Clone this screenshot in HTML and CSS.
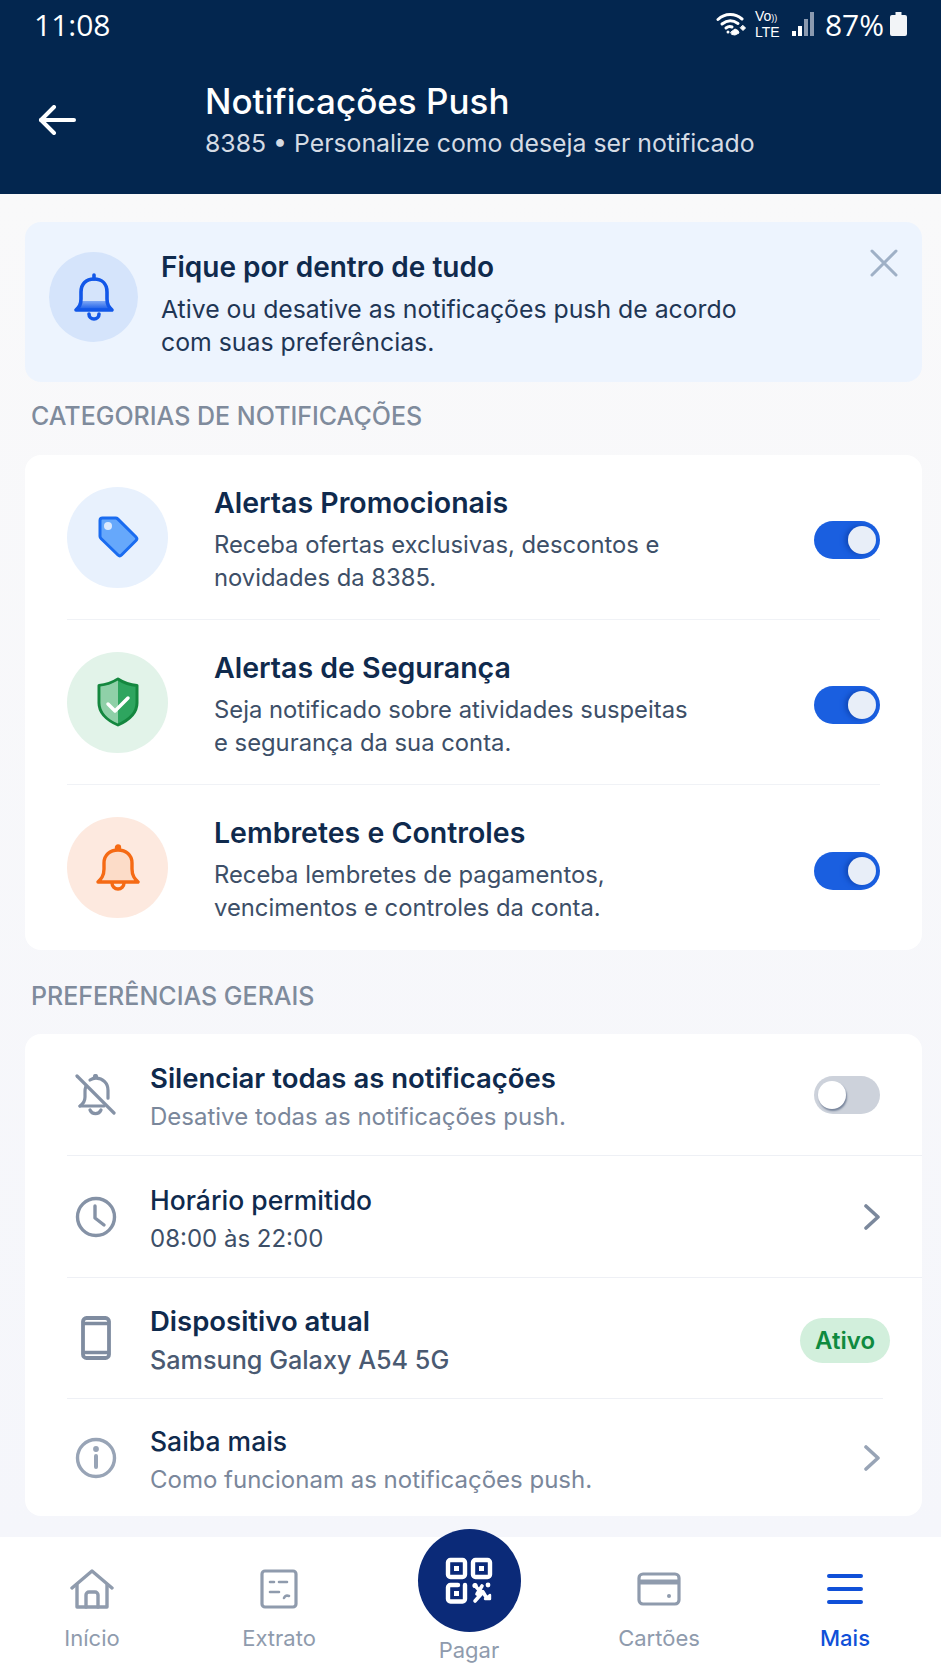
FILE: index.html
```html
<!DOCTYPE html>
<html lang="pt-br">
<head>
    <meta charset="UTF-8" />
    <title>Notificações Push</title>
    <link rel="stylesheet" href="styles.css">
</head>
<body>
    <div class="app">
        <header class="topo">
            <div class="status">
                <span class="hora">11:08</span>
                <div class="status-dir">
                    <svg class="wifi" width="31" height="24" viewBox="0 0 31 24" fill="none" stroke="#fff" stroke-width="3" stroke-linecap="round">
                        <path d="M2 7.500c7-6.500 17-6.500 24-.500"/>
                        <path d="M6 12c5-4 11-4 16-.500"/>
                        <path d="M10 16c2-1.500 4-1.800 6-1"/>
                        <path d="M15 20l4-3 3 1.500 1 2.500-4 2-3-.500z" fill="#fff" stroke-width="1"/>
                        <path d="M27 13.500l2.500 2.500-2.500 2.500-2.500-2.500z" fill="#fff" stroke-width="1"/>
                        <circle cx="12" cy="20" r="1.500" fill="#fff" stroke="none"/>
                    </svg>
                    <span class="volte">Vo<small>))</small><br>LTE</span>
                    <svg class="sinal" width="24" height="26" viewBox="0 0 24 26">
                        <rect x="1" y="20" width="4" height="5" fill="#fff"/>
                        <rect x="7" y="15" width="4" height="10" fill="#fff"/>
                        <rect x="13" y="8" width="4" height="17" fill="#8b9ab0"/>
                        <rect x="19" y="1" width="4" height="24" fill="#8b9ab0"/>
                    </svg>
                    <span class="bateria-txt">87%</span>
                    <svg class="bateria" width="17" height="24" viewBox="0 0 17 24">
                        <path d="M5.500 0h6v3h3.500a2 2 0 0 1 2 2v17a2 2 0 0 1-2 2H2a2 2 0 0 1-2-2V5a2 2 0 0 1 2-2h3.500z" fill="#f2f4f7"/>
                    </svg>
                </div>
            </div>
            <div class="barra">
                <svg class="voltar" width="38" height="30" viewBox="0 0 38 30" fill="none" stroke="#fff" stroke-width="4" stroke-linecap="round" stroke-linejoin="round">
                    <path d="M3 15h33"/>
                    <path d="M16 2 3 15l13 13"/>
                </svg>
                <div>
                    <h1>Notificações Push</h1>
                    <p>8385 • Personalize como deseja ser notificado</p>
                </div>
            </div>
        </header>

        <main class="conteudo">
            <section class="aviso">
                <div class="aviso-icone">
                    <svg width="42" height="48" viewBox="0 0 42 48" fill="none" stroke="#1257e8" stroke-width="3.600" stroke-linecap="round" stroke-linejoin="round">
                        <path d="M3 37c3-3 5-5 5-11v-7c0-8 5-13 13-13s13 5 13 13v7c0 6 2 8 5 11z" fill="url(#sino)"/>
                        <path d="M21 2v4"/>
                        <path d="M16 41a5 5 0 0 0 10 0"/>
                        <defs>
                            <linearGradient id="sino" x1="0" y1="0" x2="0" y2="1">
                                <stop offset="0.700" stop-color="#1257e8" stop-opacity="0"/>
                                <stop offset="0.710" stop-color="#7fa8f5"/>
                                <stop offset="1" stop-color="#1257e8"/>
                            </linearGradient>
                        </defs>
                    </svg>
                </div>
                <div class="aviso-texto">
                    <h2>Fique por dentro de tudo</h2>
                    <p>Ative ou desative as notificações push de acordo<br>com suas preferências.</p>
                </div>
                <svg class="fechar" width="28" height="28" viewBox="0 0 28 28" stroke="#9fb0c6" stroke-width="3" stroke-linecap="round">
                    <path d="M2 2l24 24M26 2 2 26"/>
                </svg>
            </section>

            <h3 class="secao secao-1">CATEGORIAS DE NOTIFICAÇÕES</h3>
            <section class="card">
                <div class="categoria">
                    <div class="circulo azul">
                        <svg width="44" height="44" viewBox="0 0 44 44">
                            <path d="M4 5.500a2.500 2.500 0 0 1 2.500-2.500h13a3 3 0 0 1 2.200.900l18.300 18.100a2.500 2.500 0 0 1 0 3.500L25.500 40a2.500 2.500 0 0 1-3.500 0L5 23.500a3 3 0 0 1-1-2.200z" fill="#66a8fb" stroke="#1a6cf0" stroke-width="3" stroke-linejoin="round"/>
                            <circle cx="12" cy="11" r="4" fill="#dbe9fd"/>
                        </svg>
                    </div>
                    <div class="categoria-texto">
                        <h4>Alertas Promocionais</h4>
                        <p>Receba ofertas exclusivas, descontos e<br>novidades da 8385.</p>
                    </div>
                    <span class="chave ligada"><i></i></span>
                </div>
                <div class="categoria">
                    <div class="circulo verde">
                        <svg width="44" height="50" viewBox="0 0 44 50">
                            <path d="M22 2c6 4 12 6 19 6.500V26c0 10-8 17-19 22C11 43 3 36 3 26V8.500C10 8 16 6 22 2z" fill="#2ea55f" stroke="#14873f" stroke-width="3" stroke-linejoin="round"/>
                            <path d="M22 3.500C16 7 10 9 4.500 9.500V26c0 9 7 16 17.500 20.500z" fill="#8fd0a8"/>
                            <path d="M12 27l7 7 13-13" fill="none" stroke="#fff" stroke-width="3.500" stroke-linecap="round" stroke-linejoin="round"/>
                        </svg>
                    </div>
                    <div class="categoria-texto">
                        <h4>Alertas de Segurança</h4>
                        <p>Seja notificado sobre atividades suspeitas<br>e segurança da sua conta.</p>
                    </div>
                    <span class="chave ligada"><i></i></span>
                </div>
                <div class="categoria">
                    <div class="circulo laranja">
                        <svg width="44" height="48" viewBox="0 0 44 48" fill="none" stroke="#f56a14" stroke-width="3.400" stroke-linecap="round" stroke-linejoin="round">
                            <path d="M2 38c3-3 6-6 6-13v-6c0-8 6-13 14-13s14 5 14 13v6c0 7 3 10 6 13z" fill="#fcdcc8"/>
                            <circle cx="22" cy="3.500" r="1.500" fill="#f56a14"/>
                            <path d="M16 39a6 6 0 0 0 12 0"/>
                        </svg>
                    </div>
                    <div class="categoria-texto">
                        <h4>Lembretes e Controles</h4>
                        <p>Receba lembretes de pagamentos,<br>vencimentos e controles da conta.</p>
                    </div>
                    <span class="chave ligada"><i></i></span>
                </div>
            </section>

            <h3 class="secao secao-2">PREFERÊNCIAS GERAIS</h3>
            <section class="card">
                <div class="pref">
                    <svg class="pref-icone" width="42" height="42" viewBox="0 0 42 42" fill="none" stroke="#8592a6" stroke-width="3.200" stroke-linecap="round" stroke-linejoin="round">
                        <path d="M5 32c3-2 5-4 5-9v-6c0-2 .5-3.500 1-5"/>
                        <path d="M15 6c1.800-1.200 3.800-1.800 6-1.800 7 0 12 5 12 12v8"/>
                        <path d="M5 32h24"/>
                        <circle cx="20.500" cy="2.500" r="1" fill="#8592a6"/>
                        <path d="M15 36a6 6 0 0 0 11 0"/>
                        <path d="M2 2l37 37"/>
                    </svg>
                    <div class="pref-texto">
                        <h4>Silenciar todas as notificações</h4>
                        <p class="fraco">Desative todas as notificações push.</p>
                    </div>
                    <span class="chave desligada"><i></i></span>
                </div>
                <div class="pref">
                    <svg class="pref-icone" width="42" height="42" viewBox="0 0 42 42" fill="none" stroke="#8592a6" stroke-width="3.400" stroke-linecap="round" stroke-linejoin="round">
                        <circle cx="21" cy="21" r="18.500"/>
                        <path d="M20 10v12l9 7"/>
                    </svg>
                    <div class="pref-texto">
                        <h4 class="normal">Horário permitido</h4>
                        <p>08:00 às 22:00</p>
                    </div>
                    <svg class="seta" width="16" height="26" viewBox="0 0 16 26" fill="none" stroke="#7b889c" stroke-width="3.600" stroke-linecap="round" stroke-linejoin="round">
                        <path d="M2 2l12 11L2 24"/>
                    </svg>
                </div>
                <div class="pref">
                    <svg class="pref-icone" width="42" height="44" viewBox="0 0 42 44" fill="none" stroke="#7f8ca0" stroke-width="3.800" stroke-linejoin="round">
                        <rect x="8" y="2" width="26" height="40" rx="3.500"/>
                        <path d="M8 7.500h26M8 36.500h26" stroke-width="3.400"/>
                    </svg>
                    <div class="pref-texto">
                        <h4>Dispositivo atual</h4>
                        <p class="medio">Samsung Galaxy A54 5G</p>
                    </div>
                    <span class="selo">Ativo</span>
                </div>
                <div class="pref">
                    <svg class="pref-icone" width="42" height="42" viewBox="0 0 42 42" fill="none" stroke="#98a4b6" stroke-width="3.400" stroke-linecap="round">
                        <circle cx="21" cy="21" r="18.500"/>
                        <path d="M21 19v11" stroke-width="4"/>
                        <circle cx="21" cy="12" r="1.200" fill="#98a4b6"/>
                    </svg>
                    <div class="pref-texto">
                        <h4 class="normal">Saiba mais</h4>
                        <p class="fraco">Como funcionam as notificações push.</p>
                    </div>
                    <svg class="seta" width="16" height="26" viewBox="0 0 16 26" fill="none" stroke="#98a4b6" stroke-width="3.600" stroke-linecap="round" stroke-linejoin="round">
                        <path d="M2 2l12 11L2 24"/>
                    </svg>
                </div>
            </section>
        </main>

        <nav class="menu">
            <div class="item">
                <svg width="44" height="40" viewBox="0 0 44 40" fill="none" stroke="#8f9bad" stroke-width="3.400" stroke-linecap="round" stroke-linejoin="round">
                    <path d="M2 19 22 2l20 17"/>
                    <path d="M7 16v22h30V16"/>
                    <path d="M16 38V26a3 3 0 0 1 3-3h6a3 3 0 0 1 3 3v12"/>
                </svg>
                <span>Início</span>
            </div>
            <div class="item">
                <svg width="38" height="40" viewBox="0 0 38 40" fill="none" stroke="#8f9bad" stroke-width="3.200" stroke-linecap="round" stroke-linejoin="round">
                    <rect x="2" y="2" width="34" height="36" rx="3"/>
                    <path d="M10 13h4M19 13h8M10 23h9M24 29c1-2 3-3 5-2" stroke-width="2.600"/>
                </svg>
                <span>Extrato</span>
            </div>
            <div class="item item-pagar">
                <div class="qr">
                    <svg width="48" height="47" viewBox="0 0 48 47" fill="none" stroke="#fff" stroke-width="4.400" stroke-linejoin="round" stroke-linecap="round">
                        <rect x="3" y="3" width="17" height="17" rx="2.500"/>
                        <rect x="28" y="3" width="17" height="17" rx="2.500"/>
                        <path d="M20 28v14a2.500 2.500 0 0 1-2.500 2.500h-12A2.500 2.500 0 0 1 3 42V30.500A2.500 2.500 0 0 1 5.500 28H13"/>
                        <rect x="9" y="9" width="5" height="5" fill="#fff" stroke="none"/>
                        <rect x="34" y="9" width="5" height="5" fill="#fff" stroke="none"/>
                        <rect x="9" y="34" width="5" height="5" fill="#fff" stroke="none"/>
                        <path d="M30 28c2 4 5 6 8 7l-8 9M37 29l-5 8M38 35l3 5" stroke-width="3.600"/>
                        <circle cx="30" cy="28.500" r="2.600" fill="#fff" stroke="none"/>
                        <circle cx="43" cy="28" r="2.400" fill="#fff" stroke="none"/>
                        <path d="M40 42h5v-4z" fill="#fff" stroke-width="2.400"/>
                    </svg>
                </div>
                <span>Pagar</span>
            </div>
            <div class="item">
                <svg class="icone-cartao" width="44" height="34" viewBox="0 0 44 34" fill="none" stroke="#8f9bad" stroke-width="3.200">
                    <rect x="2" y="2" width="40" height="30" rx="4"/>
                    <path d="M2 10h40" stroke-width="5"/>
                    <circle cx="32" cy="24" r="2" fill="#8f9bad" stroke="none"/>
                </svg>
                <span>Cartões</span>
            </div>
            <div class="item ativo">
                <svg class="icone-mais" width="36" height="32" viewBox="0 0 36 32" stroke="#1050d8" stroke-width="4" stroke-linecap="round">
                    <path d="M2 3h32M2 16h32M2 29h32"/>
                </svg>
                <span>Mais</span>
            </div>
        </nav>
    </div>
</body>
</html>
```

FILE: styles.css
```css
* {
    box-sizing: border-box;
}

body {
    margin: 0;
    font-family: Inter, "Open Sans", sans-serif;
    background-color: #f7f8fb;
    color: #0f2a4d;
}

h1, h2, h3, h4, p {
    margin: 0;
}

.app {
    display: flex;
    flex-direction: column;
    width: 941px;
    height: 1672px;
    overflow: hidden;
}

/* topo */
.topo {
    height: 194px;
    background-color: #03264f;
    color: #fff;
}

.status {
    display: flex;
    justify-content: space-between;
    align-items: center;
    height: 48px;
    padding: 0 34px;
}

.hora {
    font-family: "Open Sans", sans-serif;
    font-size: 30px;
}

.status-dir {
    display: flex;
    align-items: center;
}

.wifi {
    margin-right: 8px;
}

.volte {
    width: 28px;
    font-size: 14px;
    line-height: 14px;
    font-family: "Liberation Sans", sans-serif;
    margin-right: 8px;
}

.volte small {
    font-size: 9px;
}

.sinal {
    margin-right: 10px;
}

.bateria-txt {
    font-family: "Open Sans", sans-serif;
    font-size: 30px;
    margin-right: 6px;
}

.barra {
    display: flex;
    align-items: center;
    padding: 33px 0 0 38px;
}

.voltar {
    margin-right: 129px;
}

.barra h1 {
    font-size: 35px;
    font-weight: 500;
    line-height: 40px;
}

.barra p {
    margin-top: 6px;
    font-size: 24.800px;
    line-height: 32px;
    color: #d5dbe4;
}

/* conteudo */
.conteudo {
    flex: 1;
    padding: 28px 19px 0 25px;
    background: linear-gradient(#f9f9fa, #f5f6fb);
}

.aviso {
    display: flex;
    align-items: flex-start;
    height: 160px;
    padding: 30px 24px 0 24px;
    background-color: #edf4fe;
    border-radius: 16px;
}

.aviso-icone {
    display: flex;
    align-items: center;
    justify-content: center;
    width: 89px;
    height: 90px;
    margin-right: 23px;
    background-color: #d5e4fb;
    border-radius: 50%;
}

.aviso-texto {
    flex: 1;
}

.aviso-texto h2 {
    font-size: 28px;
    font-weight: 600;
    line-height: 30px;
    margin-bottom: 11px;
}

.aviso-texto p {
    font-size: 24.800px;
    line-height: 33px;
    color: #1f3655;
}

.fechar {
    margin-top: -3px;
    margin-left: -3px;
}

.secao {
    font-size: 25px;
    font-weight: 500;
    line-height: 30px;
    color: #7f8b9c;
    padding-left: 6px;
}

.secao-1 {
    margin: 19px 0 24px;
}

.secao-2 {
    margin: 31px 0 23px;
}

.card {
    background-color: #fff;
    border-radius: 16px;
}

.categoria {
    display: flex;
    align-items: center;
    height: 165px;
    margin-right: 42px;
    margin-left: 42px;
    border-bottom: 1px solid #f0f2f6;
}

.categoria:last-child {
    border-bottom: none;
}

.circulo {
    display: flex;
    align-items: center;
    justify-content: center;
    width: 101px;
    height: 101px;
    margin-right: 46px;
    border-radius: 50%;
    flex-shrink: 0;
}

.azul {
    background-color: #e8f1fd;
}

.verde {
    background-color: #e2f3e9;
}

.laranja {
    background-color: #fde9df;
}

.categoria-texto {
    flex: 1;
    padding-top: 5px;
}

.categoria-texto h4 {
    font-size: 28.500px;
    font-weight: 600;
    line-height: 34px;
    margin-bottom: 8px;
}

.categoria-texto p {
    font-size: 23.800px;
    line-height: 33px;
    color: #3d4f68;
}

.chave {
    position: relative;
    display: block;
    width: 66px;
    height: 38px;
    border-radius: 19px;
}

.categoria .chave {
    margin-top: 6px;
}

.chave i {
    position: absolute;
    top: 5px;
    width: 28px;
    height: 28px;
    border-radius: 50%;
}

.ligada {
    background-color: #1a5fe0;
}

.ligada i {
    right: 4px;
    background-color: #e8eef8;
    box-shadow: -3px 0 5px #1048b8;
}

.desligada {
    background-color: #cdd2db;
}

.desligada i {
    left: 4px;
    background-color: #fff;
    box-shadow: 1px 2px 2px #76839a;
}

.pref {
    display: flex;
    align-items: center;
    height: 122px;
    margin-left: 42px;
    padding-right: 42px;
    border-bottom: 1px solid #eef0f5;
}

.pref:nth-child(3) {
    height: 121px;
    margin-right: 39px;
    padding-right: 3px;
}

.pref:last-child {
    height: 117px;
    border-bottom: none;
}

.pref-icone {
    width: 42px;
    margin-left: 8px;
    margin-right: 33px;
    flex-shrink: 0;
}

.pref-texto {
    flex: 1;
    padding-top: 4px;
}

.pref-texto h4 {
    font-size: 27.500px;
    font-weight: 600;
    line-height: 34px;
    margin-bottom: 6px;
}

.pref-texto h4.normal {
    font-size: 26.500px;
    font-weight: 500;
}

.pref-texto p {
    font-size: 24px;
    line-height: 32px;
    color: #3d4f68;
}

.pref-texto p.fraco {
    color: #7a879b;
}

.pref-texto p.medio {
    font-size: 25.200px;
    font-weight: 500;
    color: #4a5a72;
}

.selo {
    margin-top: 4px;
    margin-right: -10px;
    padding: 0 15px;
    height: 45px;
    line-height: 45px;
    font-size: 24px;
    font-weight: 600;
    color: #0f8a3f;
    background-color: #d2efdc;
    border-radius: 23px;
}

/* menu de baixo */
.menu {
    display: grid;
    grid-template-columns: 184px 190px 190px 190px 182px;
    height: 135px;
    background-color: #fff;
}

.item {
    display: flex;
    flex-direction: column;
    align-items: center;
    padding-top: 32px;
    font-size: 22px;
    color: #8f9bad;
}

.item span {
    margin-top: 15px;
    line-height: 28px;
}

.item .icone-cartao {
    margin: 3px 0;
}

.item .icone-mais {
    margin: 4px 0;
}

.ativo {
    color: #1050d8;
    font-weight: 500;
}

.item-pagar {
    padding-top: 0;
}

.qr {
    display: flex;
    align-items: center;
    justify-content: center;
    width: 103px;
    height: 103px;
    margin-top: -8px;
    background-color: #0b2a78;
    border-radius: 50%;
}

.item-pagar span {
    margin-top: 4px;
}
```
